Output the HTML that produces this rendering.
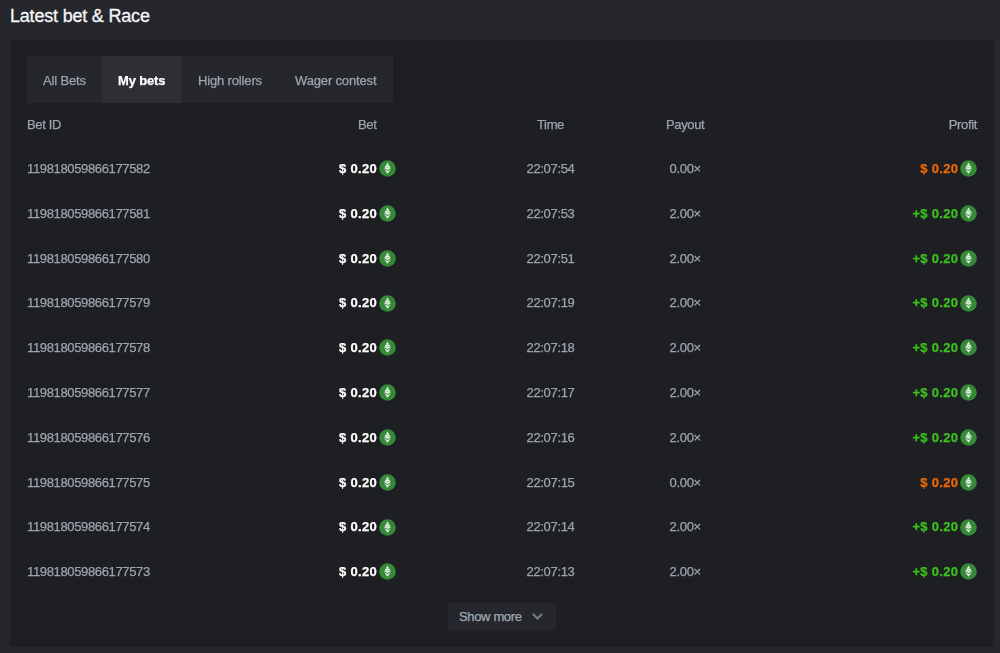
<!DOCTYPE html><html><head><meta charset="utf-8"><style>
*{margin:0;padding:0;box-sizing:border-box}
html,body{width:1000px;height:653px;overflow:hidden;background:#25272c;font-family:"Liberation Sans",sans-serif;position:relative}
.t{position:absolute;white-space:nowrap;font-size:13px;line-height:15px;letter-spacing:-0.35px;color:#9ba5b0;-webkit-text-stroke:0.25px currentColor}
.title{position:absolute;left:10px;font-size:18px;line-height:21px;color:#f5f6f7;letter-spacing:-0.2px;white-space:nowrap;-webkit-text-stroke:0.3px currentColor}
.panel{position:absolute;left:10px;top:39.5px;width:983.5px;height:607px;background:#1e1f22;border-radius:2px}
.tabs{position:absolute;left:27px;top:56px;width:366px;height:47px;background:#25272c}
.tabact{position:absolute;left:102px;top:56px;width:79px;height:47px;background:#2d2f34}
.b{font-weight:bold;letter-spacing:0.3px;color:#fff}
.tb{letter-spacing:-0.15px}
.gray{position:absolute;left:0;top:0;width:1000px;height:653px;will-change:transform}
.r{text-align:right}
.c{text-align:center}
.g{color:#3cc01e}.o{color:#ec6a06}
.coin{position:absolute}
.more{position:absolute;left:448px;top:603px;width:108px;height:27px;background:#25272c}
</style></head><body>
<div class="title" style="top:6px">Latest bet &amp; Race</div>
<div class="panel"></div><div class="tabs"></div><div class="tabact"></div>
<div class="gray">
<div class="t tb" style="left:43px;top:73px">All Bets</div>
</div>
<div class="t b tb" style="left:118px;top:73px">My bets</div>
<div class="gray">
<div class="t tb" style="left:198px;top:73px">High rollers</div>
<div class="t tb" style="left:295px;top:73px">Wager contest</div>
</div>
<div class="gray">
<div class="t" style="left:27px;top:117px">Bet ID</div>
<div class="t r" style="right:623.5px;top:117px">Bet</div>
<div class="t c" style="left:500.5px;width:100px;top:117px">Time</div>
<div class="t c" style="left:635.2px;width:100px;top:117px">Payout</div>
<div class="t r" style="right:23px;top:117px">Profit</div>
<div class="t" style="left:27px;top:160.90px">119818059866177582</div>
<div class="t b r" style="right:623.00px;top:160.90px">$ 0.20</div>
<svg class="coin" style="left:378.60px;top:160.10px" width="17" height="17" viewBox="0 0 17 17"><circle cx="8.5" cy="8.5" r="8.3" fill="#358a38"/><path d="M8.5 2.5 L11.8 8.3 L8.5 10.1 L5.2 8.3Z M8.5 11 L11.8 9.2 L8.5 13.7 L5.2 9.2Z" fill="#e6f1e6"/><path d="M6.6 5.4 H10.4 M5.8 7.6 H11.2" stroke="#358a38" stroke-width="0.6" opacity="0.55"/></svg>
<div class="t c" style="left:500.5px;width:100px;top:160.90px">22:07:54</div>
<div class="t c" style="left:635.2px;width:100px;top:160.90px">0.00×</div>
<div class="t b r o" style="right:41.70px;top:160.90px">$ 0.20</div>
<svg class="coin" style="left:959.90px;top:160.10px" width="17" height="17" viewBox="0 0 17 17"><circle cx="8.5" cy="8.5" r="8.3" fill="#358a38"/><path d="M8.5 2.5 L11.8 8.3 L8.5 10.1 L5.2 8.3Z M8.5 11 L11.8 9.2 L8.5 13.7 L5.2 9.2Z" fill="#e6f1e6"/><path d="M6.6 5.4 H10.4 M5.8 7.6 H11.2" stroke="#358a38" stroke-width="0.6" opacity="0.55"/></svg>
<div class="t" style="left:27px;top:205.72px">119818059866177581</div>
<div class="t b r" style="right:623.00px;top:205.72px">$ 0.20</div>
<svg class="coin" style="left:378.60px;top:204.92px" width="17" height="17" viewBox="0 0 17 17"><circle cx="8.5" cy="8.5" r="8.3" fill="#358a38"/><path d="M8.5 2.5 L11.8 8.3 L8.5 10.1 L5.2 8.3Z M8.5 11 L11.8 9.2 L8.5 13.7 L5.2 9.2Z" fill="#e6f1e6"/><path d="M6.6 5.4 H10.4 M5.8 7.6 H11.2" stroke="#358a38" stroke-width="0.6" opacity="0.55"/></svg>
<div class="t c" style="left:500.5px;width:100px;top:205.72px">22:07:53</div>
<div class="t c" style="left:635.2px;width:100px;top:205.72px">2.00×</div>
<div class="t b r g" style="right:41.70px;top:205.72px">+$ 0.20</div>
<svg class="coin" style="left:959.90px;top:204.92px" width="17" height="17" viewBox="0 0 17 17"><circle cx="8.5" cy="8.5" r="8.3" fill="#358a38"/><path d="M8.5 2.5 L11.8 8.3 L8.5 10.1 L5.2 8.3Z M8.5 11 L11.8 9.2 L8.5 13.7 L5.2 9.2Z" fill="#e6f1e6"/><path d="M6.6 5.4 H10.4 M5.8 7.6 H11.2" stroke="#358a38" stroke-width="0.6" opacity="0.55"/></svg>
<div class="t" style="left:27px;top:250.54px">119818059866177580</div>
<div class="t b r" style="right:623.00px;top:250.54px">$ 0.20</div>
<svg class="coin" style="left:378.60px;top:249.74px" width="17" height="17" viewBox="0 0 17 17"><circle cx="8.5" cy="8.5" r="8.3" fill="#358a38"/><path d="M8.5 2.5 L11.8 8.3 L8.5 10.1 L5.2 8.3Z M8.5 11 L11.8 9.2 L8.5 13.7 L5.2 9.2Z" fill="#e6f1e6"/><path d="M6.6 5.4 H10.4 M5.8 7.6 H11.2" stroke="#358a38" stroke-width="0.6" opacity="0.55"/></svg>
<div class="t c" style="left:500.5px;width:100px;top:250.54px">22:07:51</div>
<div class="t c" style="left:635.2px;width:100px;top:250.54px">2.00×</div>
<div class="t b r g" style="right:41.70px;top:250.54px">+$ 0.20</div>
<svg class="coin" style="left:959.90px;top:249.74px" width="17" height="17" viewBox="0 0 17 17"><circle cx="8.5" cy="8.5" r="8.3" fill="#358a38"/><path d="M8.5 2.5 L11.8 8.3 L8.5 10.1 L5.2 8.3Z M8.5 11 L11.8 9.2 L8.5 13.7 L5.2 9.2Z" fill="#e6f1e6"/><path d="M6.6 5.4 H10.4 M5.8 7.6 H11.2" stroke="#358a38" stroke-width="0.6" opacity="0.55"/></svg>
<div class="t" style="left:27px;top:295.36px">119818059866177579</div>
<div class="t b r" style="right:623.00px;top:295.36px">$ 0.20</div>
<svg class="coin" style="left:378.60px;top:294.56px" width="17" height="17" viewBox="0 0 17 17"><circle cx="8.5" cy="8.5" r="8.3" fill="#358a38"/><path d="M8.5 2.5 L11.8 8.3 L8.5 10.1 L5.2 8.3Z M8.5 11 L11.8 9.2 L8.5 13.7 L5.2 9.2Z" fill="#e6f1e6"/><path d="M6.6 5.4 H10.4 M5.8 7.6 H11.2" stroke="#358a38" stroke-width="0.6" opacity="0.55"/></svg>
<div class="t c" style="left:500.5px;width:100px;top:295.36px">22:07:19</div>
<div class="t c" style="left:635.2px;width:100px;top:295.36px">2.00×</div>
<div class="t b r g" style="right:41.70px;top:295.36px">+$ 0.20</div>
<svg class="coin" style="left:959.90px;top:294.56px" width="17" height="17" viewBox="0 0 17 17"><circle cx="8.5" cy="8.5" r="8.3" fill="#358a38"/><path d="M8.5 2.5 L11.8 8.3 L8.5 10.1 L5.2 8.3Z M8.5 11 L11.8 9.2 L8.5 13.7 L5.2 9.2Z" fill="#e6f1e6"/><path d="M6.6 5.4 H10.4 M5.8 7.6 H11.2" stroke="#358a38" stroke-width="0.6" opacity="0.55"/></svg>
<div class="t" style="left:27px;top:340.18px">119818059866177578</div>
<div class="t b r" style="right:623.00px;top:340.18px">$ 0.20</div>
<svg class="coin" style="left:378.60px;top:339.38px" width="17" height="17" viewBox="0 0 17 17"><circle cx="8.5" cy="8.5" r="8.3" fill="#358a38"/><path d="M8.5 2.5 L11.8 8.3 L8.5 10.1 L5.2 8.3Z M8.5 11 L11.8 9.2 L8.5 13.7 L5.2 9.2Z" fill="#e6f1e6"/><path d="M6.6 5.4 H10.4 M5.8 7.6 H11.2" stroke="#358a38" stroke-width="0.6" opacity="0.55"/></svg>
<div class="t c" style="left:500.5px;width:100px;top:340.18px">22:07:18</div>
<div class="t c" style="left:635.2px;width:100px;top:340.18px">2.00×</div>
<div class="t b r g" style="right:41.70px;top:340.18px">+$ 0.20</div>
<svg class="coin" style="left:959.90px;top:339.38px" width="17" height="17" viewBox="0 0 17 17"><circle cx="8.5" cy="8.5" r="8.3" fill="#358a38"/><path d="M8.5 2.5 L11.8 8.3 L8.5 10.1 L5.2 8.3Z M8.5 11 L11.8 9.2 L8.5 13.7 L5.2 9.2Z" fill="#e6f1e6"/><path d="M6.6 5.4 H10.4 M5.8 7.6 H11.2" stroke="#358a38" stroke-width="0.6" opacity="0.55"/></svg>
<div class="t" style="left:27px;top:385.00px">119818059866177577</div>
<div class="t b r" style="right:623.00px;top:385.00px">$ 0.20</div>
<svg class="coin" style="left:378.60px;top:384.20px" width="17" height="17" viewBox="0 0 17 17"><circle cx="8.5" cy="8.5" r="8.3" fill="#358a38"/><path d="M8.5 2.5 L11.8 8.3 L8.5 10.1 L5.2 8.3Z M8.5 11 L11.8 9.2 L8.5 13.7 L5.2 9.2Z" fill="#e6f1e6"/><path d="M6.6 5.4 H10.4 M5.8 7.6 H11.2" stroke="#358a38" stroke-width="0.6" opacity="0.55"/></svg>
<div class="t c" style="left:500.5px;width:100px;top:385.00px">22:07:17</div>
<div class="t c" style="left:635.2px;width:100px;top:385.00px">2.00×</div>
<div class="t b r g" style="right:41.70px;top:385.00px">+$ 0.20</div>
<svg class="coin" style="left:959.90px;top:384.20px" width="17" height="17" viewBox="0 0 17 17"><circle cx="8.5" cy="8.5" r="8.3" fill="#358a38"/><path d="M8.5 2.5 L11.8 8.3 L8.5 10.1 L5.2 8.3Z M8.5 11 L11.8 9.2 L8.5 13.7 L5.2 9.2Z" fill="#e6f1e6"/><path d="M6.6 5.4 H10.4 M5.8 7.6 H11.2" stroke="#358a38" stroke-width="0.6" opacity="0.55"/></svg>
<div class="t" style="left:27px;top:429.82px">119818059866177576</div>
<div class="t b r" style="right:623.00px;top:429.82px">$ 0.20</div>
<svg class="coin" style="left:378.60px;top:429.02px" width="17" height="17" viewBox="0 0 17 17"><circle cx="8.5" cy="8.5" r="8.3" fill="#358a38"/><path d="M8.5 2.5 L11.8 8.3 L8.5 10.1 L5.2 8.3Z M8.5 11 L11.8 9.2 L8.5 13.7 L5.2 9.2Z" fill="#e6f1e6"/><path d="M6.6 5.4 H10.4 M5.8 7.6 H11.2" stroke="#358a38" stroke-width="0.6" opacity="0.55"/></svg>
<div class="t c" style="left:500.5px;width:100px;top:429.82px">22:07:16</div>
<div class="t c" style="left:635.2px;width:100px;top:429.82px">2.00×</div>
<div class="t b r g" style="right:41.70px;top:429.82px">+$ 0.20</div>
<svg class="coin" style="left:959.90px;top:429.02px" width="17" height="17" viewBox="0 0 17 17"><circle cx="8.5" cy="8.5" r="8.3" fill="#358a38"/><path d="M8.5 2.5 L11.8 8.3 L8.5 10.1 L5.2 8.3Z M8.5 11 L11.8 9.2 L8.5 13.7 L5.2 9.2Z" fill="#e6f1e6"/><path d="M6.6 5.4 H10.4 M5.8 7.6 H11.2" stroke="#358a38" stroke-width="0.6" opacity="0.55"/></svg>
<div class="t" style="left:27px;top:474.64px">119818059866177575</div>
<div class="t b r" style="right:623.00px;top:474.64px">$ 0.20</div>
<svg class="coin" style="left:378.60px;top:473.84px" width="17" height="17" viewBox="0 0 17 17"><circle cx="8.5" cy="8.5" r="8.3" fill="#358a38"/><path d="M8.5 2.5 L11.8 8.3 L8.5 10.1 L5.2 8.3Z M8.5 11 L11.8 9.2 L8.5 13.7 L5.2 9.2Z" fill="#e6f1e6"/><path d="M6.6 5.4 H10.4 M5.8 7.6 H11.2" stroke="#358a38" stroke-width="0.6" opacity="0.55"/></svg>
<div class="t c" style="left:500.5px;width:100px;top:474.64px">22:07:15</div>
<div class="t c" style="left:635.2px;width:100px;top:474.64px">0.00×</div>
<div class="t b r o" style="right:41.70px;top:474.64px">$ 0.20</div>
<svg class="coin" style="left:959.90px;top:473.84px" width="17" height="17" viewBox="0 0 17 17"><circle cx="8.5" cy="8.5" r="8.3" fill="#358a38"/><path d="M8.5 2.5 L11.8 8.3 L8.5 10.1 L5.2 8.3Z M8.5 11 L11.8 9.2 L8.5 13.7 L5.2 9.2Z" fill="#e6f1e6"/><path d="M6.6 5.4 H10.4 M5.8 7.6 H11.2" stroke="#358a38" stroke-width="0.6" opacity="0.55"/></svg>
<div class="t" style="left:27px;top:519.46px">119818059866177574</div>
<div class="t b r" style="right:623.00px;top:519.46px">$ 0.20</div>
<svg class="coin" style="left:378.60px;top:518.66px" width="17" height="17" viewBox="0 0 17 17"><circle cx="8.5" cy="8.5" r="8.3" fill="#358a38"/><path d="M8.5 2.5 L11.8 8.3 L8.5 10.1 L5.2 8.3Z M8.5 11 L11.8 9.2 L8.5 13.7 L5.2 9.2Z" fill="#e6f1e6"/><path d="M6.6 5.4 H10.4 M5.8 7.6 H11.2" stroke="#358a38" stroke-width="0.6" opacity="0.55"/></svg>
<div class="t c" style="left:500.5px;width:100px;top:519.46px">22:07:14</div>
<div class="t c" style="left:635.2px;width:100px;top:519.46px">2.00×</div>
<div class="t b r g" style="right:41.70px;top:519.46px">+$ 0.20</div>
<svg class="coin" style="left:959.90px;top:518.66px" width="17" height="17" viewBox="0 0 17 17"><circle cx="8.5" cy="8.5" r="8.3" fill="#358a38"/><path d="M8.5 2.5 L11.8 8.3 L8.5 10.1 L5.2 8.3Z M8.5 11 L11.8 9.2 L8.5 13.7 L5.2 9.2Z" fill="#e6f1e6"/><path d="M6.6 5.4 H10.4 M5.8 7.6 H11.2" stroke="#358a38" stroke-width="0.6" opacity="0.55"/></svg>
<div class="t" style="left:27px;top:564.28px">119818059866177573</div>
<div class="t b r" style="right:623.00px;top:564.28px">$ 0.20</div>
<svg class="coin" style="left:378.60px;top:563.48px" width="17" height="17" viewBox="0 0 17 17"><circle cx="8.5" cy="8.5" r="8.3" fill="#358a38"/><path d="M8.5 2.5 L11.8 8.3 L8.5 10.1 L5.2 8.3Z M8.5 11 L11.8 9.2 L8.5 13.7 L5.2 9.2Z" fill="#e6f1e6"/><path d="M6.6 5.4 H10.4 M5.8 7.6 H11.2" stroke="#358a38" stroke-width="0.6" opacity="0.55"/></svg>
<div class="t c" style="left:500.5px;width:100px;top:564.28px">22:07:13</div>
<div class="t c" style="left:635.2px;width:100px;top:564.28px">2.00×</div>
<div class="t b r g" style="right:41.70px;top:564.28px">+$ 0.20</div>
<svg class="coin" style="left:959.90px;top:563.48px" width="17" height="17" viewBox="0 0 17 17"><circle cx="8.5" cy="8.5" r="8.3" fill="#358a38"/><path d="M8.5 2.5 L11.8 8.3 L8.5 10.1 L5.2 8.3Z M8.5 11 L11.8 9.2 L8.5 13.7 L5.2 9.2Z" fill="#e6f1e6"/><path d="M6.6 5.4 H10.4 M5.8 7.6 H11.2" stroke="#358a38" stroke-width="0.6" opacity="0.55"/></svg>
</div>
<div class="more"></div>
<div class="t" style="left:459px;top:609px;color:#9fa9b4">Show more</div>
<svg style="position:absolute;left:531px;top:612px" width="13" height="9" viewBox="0 0 13 9"><path d="M2 2 L6.5 6.5 L11 2" stroke="#767c85" stroke-width="2.2" fill="none"/></svg>
</body></html>
